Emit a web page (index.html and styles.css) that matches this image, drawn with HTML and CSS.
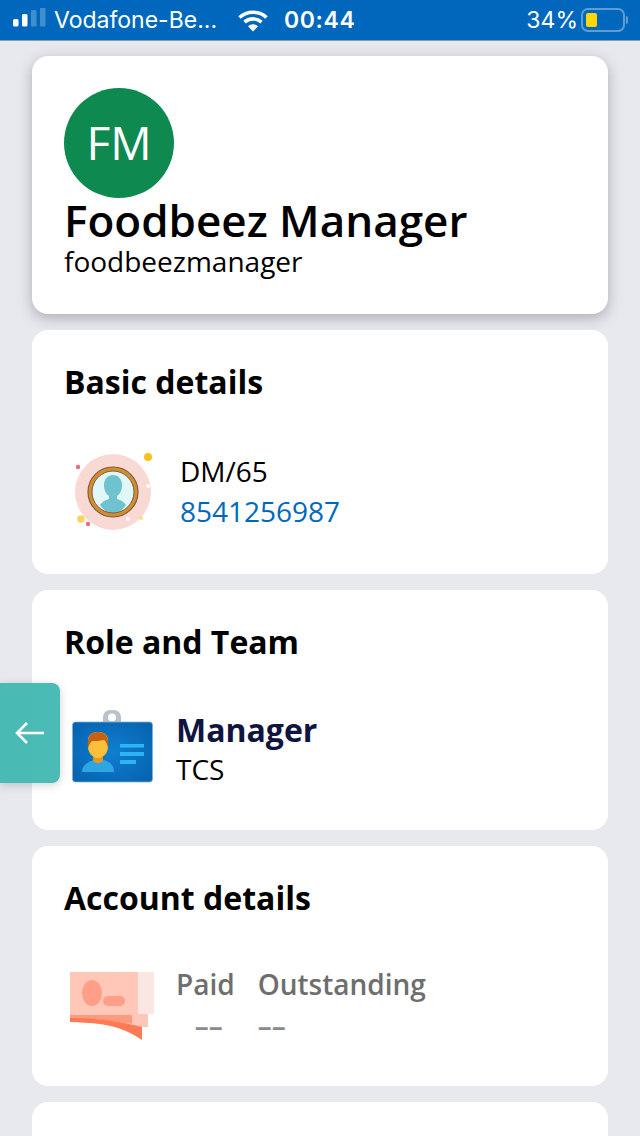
FILE: index.html
```html
<!DOCTYPE html>
<html lang="en">
<head>
<meta charset="utf-8">
<title>Profile</title>
<link rel="stylesheet" href="styles.css">
</head>
<body>
<div class="screen">
  <header class="status">
    <div class="status-left">
      <svg class="signal" width="34" height="24" viewBox="0 0 34 24">
        <rect x="0" y="11" width="5.5" height="7.5" rx="1.5" fill="#fff"/>
        <rect x="9" y="6" width="5.5" height="12.5" rx="1.5" fill="#fff"/>
        <rect x="18" y="2" width="5.5" height="16.5" rx="1.5" fill="#fff" fill-opacity=".25"/>
        <rect x="27" y="-2" width="5.5" height="20.5" rx="1.5" fill="#fff" fill-opacity=".25"/>
      </svg>
      <span class="carrier">Vodafone-Be...</span>
    </div>
    <svg class="wifi" width="32" height="24" viewBox="0 0 32 24">
      <path d="M2.5 9.5C10 2.5 22 2.5 29.5 9.5" fill="none" stroke="#fff" stroke-width="3.6"/>
      <path d="M7.5 14.2C12.5 9.8 19.5 9.8 24.5 14.2" fill="none" stroke="#fff" stroke-width="3.6"/>
      <path d="M11 18.3C14 15.6 18 15.6 21 18.3L16 23.5Z" fill="#fff"/>
    </svg>
    <span class="clock">00:44</span>
    <div class="status-right">
      <span class="percent">34%</span>
      <span class="battery"><span class="battery-fill"></span></span>
      <span class="battery-tip"></span>
    </div>
  </header>

  <main class="content">
    <section class="card profile">
      <div class="avatar">FM</div>
      <h1 class="name">Foodbeez Manager</h1>
      <div class="username">foodbeezmanager</div>
    </section>

    <section class="card basic">
      <h2 class="card-title">Basic details</h2>
      <div class="row row-basic">
        <svg class="icon icon-user" width="84" height="84" viewBox="0 0 84 84">
          <circle cx="43" cy="43" r="38" fill="#f9d9d3"/>
          <circle cx="43" cy="43" r="23" fill="#e2f8f8"/>
          <path d="M43 26c5 0 9 4 9 10 0 5-2 9-5 11v3c4 1 7 3 9 6-3 5-8 8-13 8s-10-3-13-8c2-3 5-5 9-6v-3c-3-2-5-6-5-11 0-6 4-10 9-10z" fill="#6fc3cf"/>
          <circle cx="43" cy="43" r="23" fill="none" stroke="#d3902a" stroke-width="4"/>
          <circle cx="43" cy="43" r="25" fill="none" stroke="#80584a" stroke-width="1.2"/>
          <circle cx="43" cy="43" r="21" fill="none" stroke="#80584a" stroke-width="1"/>
          <circle cx="78" cy="8" r="4" fill="#f8c21a"/>
          <circle cx="8" cy="18" r="2.2" fill="#ee6a7c"/>
          <circle cx="11" cy="70" r="3.8" fill="#fbd45a"/>
          <circle cx="18" cy="75" r="2.2" fill="#ee6a7c"/>
          <circle cx="71" cy="69" r="2" fill="#f8dc8c"/>
          <circle cx="78" cy="37" r="2" fill="#fff"/>
          <circle cx="58" cy="70" r="2" fill="#fff"/>
        </svg>
        <div class="stack">
          <div class="code">DM/65</div>
          <div class="phone">8541256987</div>
        </div>
      </div>
    </section>

    <section class="card team">
      <h2 class="card-title">Role and Team</h2>
      <div class="row row-team">
        <svg class="icon icon-badge" width="82" height="78" viewBox="0 0 82 78">
          <defs>
            <radialGradient id="badgeBg" cx=".5" cy=".5" r=".7">
              <stop offset="0" stop-color="#0f7fd0"/>
              <stop offset="1" stop-color="#0561ad"/>
            </radialGradient>
          </defs>
          <rect x="31" y="0" width="18" height="21" rx="7" fill="#b9c2cc"/>
          <circle cx="40" cy="7.5" r="4" fill="#fff"/>
          <rect x=".5" y="12" width="80" height="60" rx="3" fill="url(#badgeBg)" stroke="#7fb0d8" stroke-width=".8"/>
          <path d="M10 62c0-7 6-10 12-12h10c6 2 10 5 10 12z" fill="#2ea6e4"/>
          <rect x="21" y="44" width="10" height="9" rx="4" fill="#e29a1e"/>
          <path d="M16 31c0-6 4-9 10-9s10 3 10 9v6c0 5-4 11-10 11s-10-6-10-11z" fill="#fbbf3a"/>
          <path d="M16 38c-1-11 2-16 10-16s11 5 10 16c-1-4-2-7-4-8-4 1-9 1-12 1-2 2-3 4-4 7z" fill="#c9600f"/>
          <rect x="48" y="34" width="24" height="3.6" fill="#2cb5f4"/>
          <rect x="48" y="42" width="24" height="4" fill="#2cb5f4"/>
          <rect x="48" y="50" width="16" height="4" fill="#2cb5f4"/>
        </svg>
        <div class="stack">
          <div class="role">Manager</div>
          <div class="org">TCS</div>
        </div>
      </div>
    </section>

    <section class="card account">
      <h2 class="card-title">Account details</h2>
      <div class="row row-account">
        <svg class="icon icon-card" width="86" height="72" viewBox="0 0 86 72">
          <rect x="0" y="0" width="68" height="50" fill="#ffc7b8"/>
          <rect x="68" y="0" width="16" height="42" fill="#fce6e3"/>
          <rect x="62" y="42" width="16" height="13" fill="#ffc7b8"/>
          <ellipse cx="22" cy="21" rx="10" ry="13" fill="#ff9f87"/>
          <rect x="33" y="24" width="22" height="10" rx="5" fill="#ff9f87"/>
          <path d="M0 43H62V52L55 51C40 48 20 47 0 47Z" fill="#ff9a7f"/>
          <path d="M0 46C20 46 40 48 55 51L72 55V68C62 61 50 55 30 52 20 51 10 50 0 50Z" fill="#ff7a55"/>
        </svg>
        <div class="amounts">
          <div class="amount amount-paid">
            <div class="amount-label">Paid</div>
            <div class="amount-value">––</div>
          </div>
          <div class="amount">
            <div class="amount-label">Outstanding</div>
            <div class="amount-value">––</div>
          </div>
        </div>
      </div>
    </section>

    <section class="card tail"></section>
  </main>

  <button class="back" type="button" aria-label="Back">
    <svg width="32" height="24" viewBox="0 0 32 24">
      <path d="M30 12H3M13 2 3 12l10 10" fill="none" stroke="#fff" stroke-width="2.6"/>
    </svg>
  </button>
</div>
</body>
</html>
```

FILE: styles.css
```css
* { box-sizing: border-box; }
html, body { margin: 0; padding: 0; }
body {
  font-family: "Open Sans", "Noto Sans", sans-serif;
  color: #000;
  background: #e8e9ee;
}
.screen {
  position: relative;
  width: 640px;
  height: 1136px;
  overflow: hidden;
  background: #e8e9ee;
}
.status {
  display: flex;
  align-items: center;
  height: 41px;
  padding: 0 12px 1px 13px;
  background: #0068bc;
  border-bottom: 1px solid #8f9aa6;
  color: #fff;
  font-family: "Inter", "Liberation Sans", sans-serif;
  font-size: 23px;
}
.status-left { display: flex; align-items: center; width: 222px; gap: 7px; }
.signal { flex: none; }
.carrier { white-space: nowrap; font-weight: 400; }
.wifi { flex: none; margin-left: 2px; }
.clock { margin-left: 15px; font-weight: 600; letter-spacing: .6px; }
.status-right { display: flex; align-items: center; margin-left: auto; }
.percent { margin-right: 3px; }
.battery {
  display: flex;
  align-items: center;
  width: 44px;
  height: 24px;
  padding: 3px;
  border: 2px solid #5f9dd3;
  border-radius: 7px;
}
.battery-fill { width: 11px; height: 14px; background: #ffd60a; border-radius: 2px; }
.battery-tip { width: 2px; height: 8px; margin-left: 1px; background: #5f9dd3; border-radius: 0 2px 2px 0; }

.content {
  display: flex;
  flex-direction: column;
  gap: 16px;
  padding: 15px 32px 0;
}
.card { background: #fff; border-radius: 16px; flex: none; }
.profile {
  height: 258px;
  padding: 32px 32px 0;
  box-shadow: 0 4px 14px rgba(60, 60, 70, .35);
}
.avatar {
  display: flex;
  align-items: center;
  justify-content: center;
  width: 110px;
  height: 110px;
  padding-bottom: 2px;
  border-radius: 50%;
  background: #0e8a50;
  color: #fff;
  font-size: 46px;
  font-weight: 400;
}
.name { margin: 0; font-size: 44px; font-weight: 600; line-height: 44px; }
.username { font-size: 28px; line-height: 38px; }
.card-title { margin: 0; font-size: 32px; font-weight: 700; line-height: 40px; }
.basic, .team, .account { padding: 32px 32px 0; }
.basic { height: 244px; }
.team, .account { height: 240px; }
.tail { height: 60px; }
.row { display: flex; align-items: center; }
.row-basic { margin-top: 47px; margin-left: 6px; gap: 26px; }
.row-team { margin-top: 48px; margin-left: 8px; gap: 22px; }
.row-account { margin-top: 47px; margin-left: 6px; gap: 20px; align-items: flex-start; }
.icon { flex: none; filter: blur(.5px); }
.icon-card { margin-top: 7px; }
.stack { display: flex; flex-direction: column; }
.code { font-size: 28px; line-height: 40px; }
.phone { font-size: 28px; line-height: 40px; color: #0068bc; }
.role { font-size: 32px; font-weight: 700; line-height: 40px; color: #0f1440; }
.org { font-size: 28px; line-height: 38px; }
.amounts { display: flex; gap: 23px; }
.amount-label { font-size: 28px; font-weight: 600; line-height: 38px; color: #6e6e6e; }
.amount-value { font-size: 28px; font-weight: 600; line-height: 44px; color: #8a8a8a; }
.amount-paid { text-align: center; }
.amount-paid .amount-value { padding-left: 7px; }
.back {
  position: absolute;
  left: 0;
  top: 683px;
  display: flex;
  align-items: center;
  justify-content: center;
  width: 60px;
  height: 100px;
  padding: 0;
  border: 0;
  border-radius: 0 8px 8px 0;
  background: rgba(60, 181, 175, .92);
  box-shadow: 0 2px 10px rgba(0, 0, 0, .18);
}
```
